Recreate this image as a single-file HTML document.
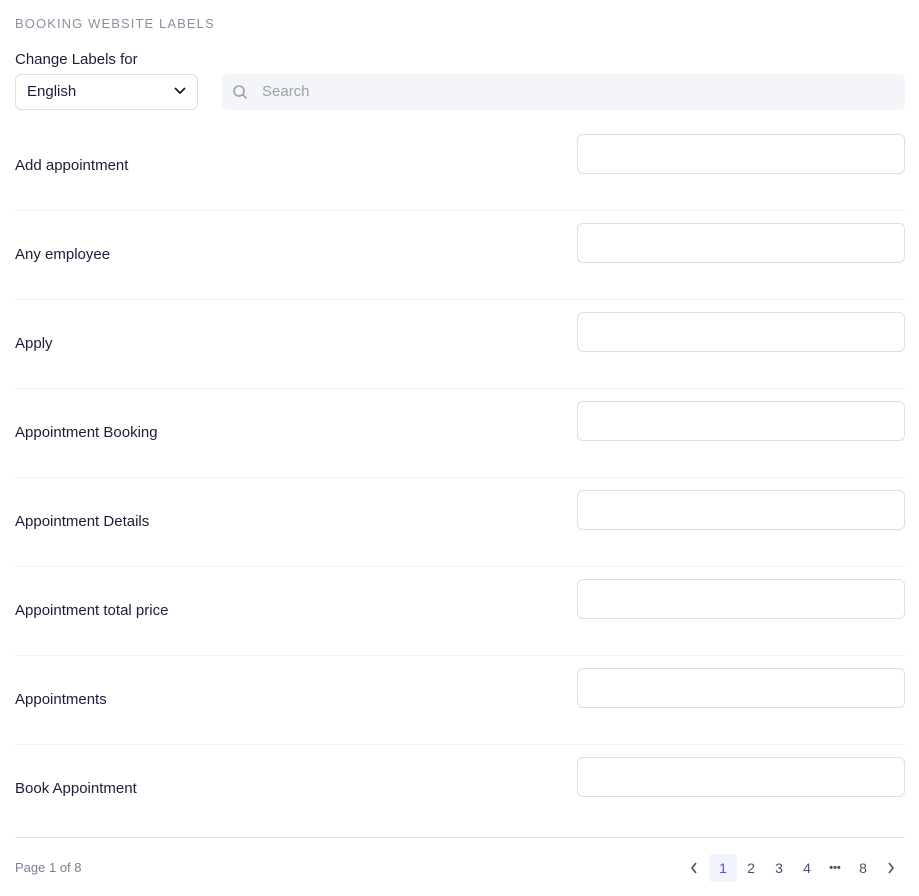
<!DOCTYPE html>
<html><head><style>
body{margin:0;background:#fff;font-family:"Liberation Sans",sans-serif;width:919px;height:896px;position:relative;overflow:hidden}
.a{position:absolute}
.t{font-size:15px;color:#1a1f36}
.inp{position:absolute;left:577px;width:326px;height:38px;border:1px solid #dcdfe6;border-radius:6px}
.hr{position:absolute;left:15px;width:890px;height:1px;background:#f0f1f4}
.p{position:absolute;top:854px;width:28px;height:28px;line-height:28px;text-align:center;font-size:14px;color:#4a5068}
</style></head><body>
<div class="a" style="left:15px;top:16px;font-size:13px;letter-spacing:1.1px;color:#8a90a2">BOOKING WEBSITE LABELS</div>
<div class="a t" style="left:15px;top:51px">Change Labels for</div>
<div class="a" style="left:15px;top:74px;width:181px;height:34px;border:1px solid #dcdfe6;border-radius:6px"></div>
<div class="a t" style="left:27px;top:83px;font-size:15px">English</div>
<svg class="a" style="left:173px;top:86px" width="14" height="10"><path d="M2 2l5 5 5-5" fill="none" stroke="#1a1f36" stroke-width="1.8"/></svg>
<div class="a" style="left:222px;top:74px;width:683px;height:36px;background:#f4f5f9;border-radius:5px"></div>
<svg class="a" style="left:232px;top:84px" width="16" height="16"><circle cx="7" cy="7" r="5" fill="none" stroke="#9aa0b0" stroke-width="1.6"/><path d="M11 11l3.5 3.5" stroke="#9aa0b0" stroke-width="1.6"/></svg>
<div class="a" style="left:262px;top:83px;font-size:15px;color:#9aa0b0">Search</div>

<div class="a t" style="left:15px;top:157px">Add appointment</div><div class="inp" style="top:134px"></div><div class="hr" style="top:210px"></div>
<div class="a t" style="left:15px;top:246px">Any employee</div><div class="inp" style="top:223px"></div><div class="hr" style="top:299px"></div>
<div class="a t" style="left:15px;top:335px">Apply</div><div class="inp" style="top:312px"></div><div class="hr" style="top:388px"></div>
<div class="a t" style="left:15px;top:424px">Appointment Booking</div><div class="inp" style="top:401px"></div><div class="hr" style="top:477px"></div>
<div class="a t" style="left:15px;top:513px">Appointment Details</div><div class="inp" style="top:490px"></div><div class="hr" style="top:566px"></div>
<div class="a t" style="left:15px;top:602px">Appointment total price</div><div class="inp" style="top:579px"></div><div class="hr" style="top:655px"></div>
<div class="a t" style="left:15px;top:691px">Appointments</div><div class="inp" style="top:668px"></div><div class="hr" style="top:744px"></div>
<div class="a t" style="left:15px;top:780px">Book Appointment</div><div class="inp" style="top:757px"></div>
<div class="a" style="left:15px;top:837px;width:890px;height:1px;background:#e0e0e3"></div>
<div class="a" style="left:15px;top:860px;font-size:13px;color:#7a8092">Page 1 of 8</div>
<svg class="a" style="left:689px;top:861px" width="10" height="14"><path d="M7 2L3 7l4 5" fill="none" stroke="#4a5068" stroke-width="1.6"/></svg>
<div class="p" style="left:709px;background:#f0f2fc;border-radius:4px;color:#5a4de0">1</div>
<div class="p" style="left:737px">2</div>
<div class="p" style="left:765px">3</div>
<div class="p" style="left:793px">4</div>
<div class="p" style="left:821px;font-size:11px;font-weight:bold">•••</div>
<div class="p" style="left:849px">8</div>
<svg class="a" style="left:886px;top:861px" width="10" height="14"><path d="M3 2l4 5-4 5" fill="none" stroke="#4a5068" stroke-width="1.6"/></svg>
</body></html>
